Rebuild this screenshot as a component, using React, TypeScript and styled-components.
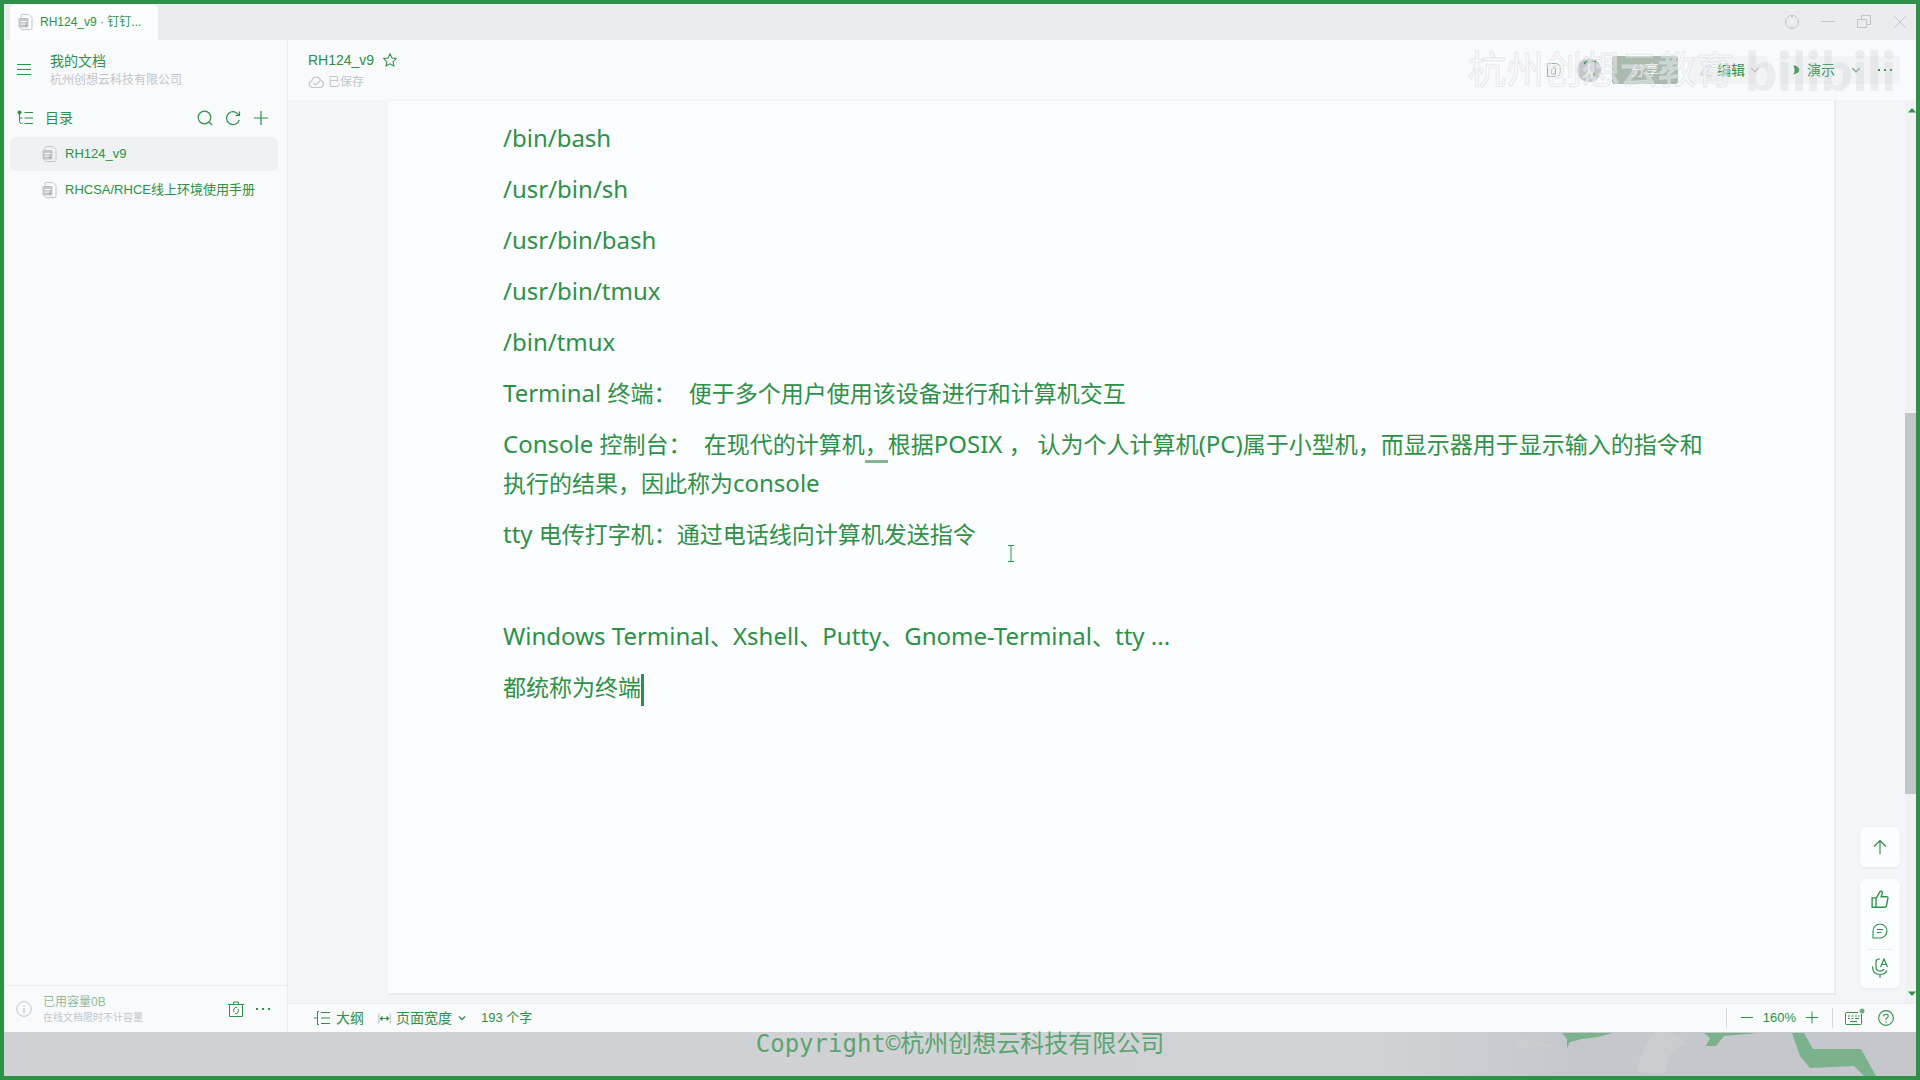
import React from "react";
import styled, { createGlobalStyle } from "styled-components";

const green = "#2d9147";
const gray = "#c2c5ca";
const line = "#ebecee";
const white = "#fcfdff";
const soft = "#f9fafc";
const ui = `"Liberation Sans", "Noto Sans CJK SC", sans-serif`;

const Global = createGlobalStyle`
  * { box-sizing: border-box; }
  body { margin: 0; background: ${white}; }
  button, select { font: inherit; color: inherit; background: none; border: 0; padding: 0; margin: 0; }
  p, h1, ul { margin: 0; padding: 0; font-weight: 400; }
  a { color: inherit; text-decoration: none; }
  svg { display: block; flex: none; }
`;

const Frame = styled.div`
  display: flex;
  flex-direction: column;
  height: 100vh;
  border: 4px solid ${green};
  color: ${green};
  background: ${soft};
  font: 14px/20px ${ui};
  overflow: hidden;
`;

/* ---- window bar ---- */
const WindowBar = styled.header`
  display: flex;
  justify-content: space-between;
  flex: none;
  height: 36px;
  padding: 0 8px 0 6px;
  background: ${line};
`;
const Tab = styled.button`
  display: flex;
  align-items: center;
  gap: 7px;
  width: 148px;
  padding: 0 8px;
  border-radius: 6px 6px 0 0;
  background: ${white};
  font-size: 12px;
  white-space: nowrap;
`;
const WindowButtons = styled.div`
  display: flex;
  align-items: center;
  gap: 20px;
  color: ${gray};
`;
const IconButton = styled.button<{ $tone?: string }>`
  display: flex;
  align-items: center;
  justify-content: center;
  min-width: 16px;
  height: 20px;
  color: ${(p) => p.$tone || "inherit"};
`;

/* ---- body ---- */
const Body = styled.div`
  display: flex;
  flex: 1;
  min-height: 0;
`;
const Sidebar = styled.aside`
  display: flex;
  flex-direction: column;
  flex: none;
  width: 284px;
  border-left: 1px solid ${line};
  border-right: 1px solid ${line};
`;
const SpaceHead = styled.div`
  display: flex;
  align-items: center;
  gap: 18px;
  height: 60px;
  padding: 0 11px;
`;
const Stack = styled.div`
  display: flex;
  flex-direction: column;
`;
const Muted = styled.span<{ $tone?: string; $size?: number }>`
  color: ${(p) => p.$tone || gray};
  font-size: ${(p) => p.$size || 12}px;
  line-height: ${(p) => (p.$size === 10 ? 14 : 18)}px;
`;
const CatalogHead = styled.div`
  display: flex;
  align-items: center;
  gap: 12px;
  height: 36px;
  padding: 0 18px 0 12px;
`;
const Grow = styled.span`
  flex: 1;
`;
const DocList = styled.ul`
  display: flex;
  flex-direction: column;
  flex: 1;
  gap: 2px;
  padding: 1px 9px 0 5px;
  list-style: none;
`;
const DocLink = styled.a<{ $active?: boolean }>`
  display: flex;
  align-items: center;
  gap: 8px;
  height: 34px;
  padding-left: 32px;
  border-radius: 6px;
  font-size: 13px;
  background: ${(p) => (p.$active ? "#f0f1f3" : "transparent")};
`;
const SideFoot = styled.footer`
  display: flex;
  align-items: center;
  gap: 11px;
  height: 47px;
  padding: 0 16px 0 11px;
  border-top: 1px solid ${line};
`;

const Main = styled.main`
  display: flex;
  flex-direction: column;
  flex: 1;
  min-width: 0;
`;
const DocHead = styled.header`
  display: flex;
  align-items: center;
  justify-content: space-between;
  position: relative;
  height: 61px;
  padding: 0 16px 0 20px;
  border-bottom: 1px solid #f4f5f7;
`;
const TitleRow = styled.div`
  display: flex;
  align-items: center;
  gap: 8px;
  padding-bottom: 2px;
  h1 { font-size: 14px; line-height: 22px; }
`;
const SavedRow = styled.div`
  display: flex;
  align-items: center;
  gap: 4px;
`;
const Tools = styled.div`
  display: flex;
  align-items: center;
  gap: 11px;
`;
const Avatar = styled.span`
  display: flex;
  align-items: center;
  justify-content: center;
  width: 24px;
  height: 24px;
  margin-left: 4px;
  border-radius: 50%;
  background: ${gray};
`;
const Share = styled.button`
  width: 66px;
  height: 28px;
  border-radius: 3px;
  color: ${line};
  background: #a9baaf;
`;
const ToolGroup = styled.div`
  display: flex;
  align-items: center;
  gap: 13px;
  height: 28px;
  padding: 0 7px 0 10px;
  border-radius: 4px;
  background: #f2f3f5;
`;
const ToolButton = styled.button`
  display: flex;
  align-items: center;
  gap: 4px;
`;
const Watermark = styled.span`
  position: absolute;
  right: 182px;
  top: 2px;
  color: rgba(252, 253, 255, 0.4);
  -webkit-text-stroke: 1px rgba(222, 224, 228, 0.7);
  font-size: 38px;
  line-height: 56px;
  pointer-events: none;
  white-space: nowrap;
`;
const SiteMark = styled.span`
  position: absolute;
  right: 20px;
  top: 0;
  color: rgba(194, 197, 202, 0.25);
  font: 900 56px/60px Lato, sans-serif;
  pointer-events: none;
`;

const Canvas = styled.div`
  display: flex;
  flex: 1;
  min-height: 0;
  position: relative;
  background: #f4f5f6;
`;
const Page = styled.article`
  flex: 1;
  margin: 0 71px 10px 100px;
  padding: 18px 116px 0 115px;
  background: ${white};
  box-shadow: 1px 1px 1px 1px ${line};
  font: 23px/39px "Noto Sans", "Noto Sans CJK SC", sans-serif;
  p { min-height: 39px; margin-bottom: 12px; }
`;
const Latin = styled.span`
  font-size: 24px;
  line-height: 24px;
`;
const Marked = styled.span`
  border-bottom: 3px solid #7fb691;
`;
const Caret = styled.span`
  display: inline-block;
  width: 3px;
  height: 32px;
  vertical-align: middle;
  background: ${green};
`;
const Pointer = styled.svg`
  position: absolute;
  left: 719px;
  top: 444px;
`;
const ScrollBar = styled.div`
  display: flex;
  flex-direction: column;
  align-items: flex-end;
  width: 11px;
  padding: 7px 0;
  background: #f0f1f3;
`;
const Spacer = styled.span<{ $part: number }>`
  flex: ${(p) => p.$part};
`;
const Thumb = styled.span`
  flex: 381;
  width: 11px;
  background: ${gray};
`;
const Floating = styled.div`
  display: flex;
  flex-direction: column;
  gap: 12px;
  position: absolute;
  right: 16px;
  bottom: 15px;
`;
const Card = styled.div`
  display: flex;
  flex-direction: column;
  align-items: center;
  gap: 12px;
  width: 40px;
  padding: 10px 0;
  border-radius: 6px;
  background: ${white};
  box-shadow: 0 1px 3px #e6e8ea;
`;
const Rule = styled.span`
  width: 26px;
  height: 1px;
  margin: -4px 0;
  background: ${line};
`;
const StatusBar = styled.footer`
  display: flex;
  align-items: center;
  justify-content: space-between;
  height: 29px;
  padding: 0 22px 0 26px;
  border-top: 1px solid ${line};
`;
const Group = styled.div<{ $gap: number }>`
  display: flex;
  align-items: center;
  gap: ${(p) => p.$gap}px;
`;
const Small = styled.span`
  font-size: 13px;
`;
const WidthSelect = styled.select`
  appearance: none;
  width: 56px;
`;
const Divider = styled.span`
  width: 1px;
  height: 20px;
  background: #d6d8dc;
`;

/* ---- desktop strip under the window ---- */
const Strip = styled.div`
  display: flex;
  justify-content: center;
  flex: none;
  position: relative;
  height: 44px;
  background: linear-gradient(90deg, #cfd1d5, #d0d2d6 72%, #c5c7cc 82%);
  color: #5aa571;
  font: 24px/24px "DejaVu Sans Mono", "Noto Sans CJK SC", monospace;
`;
const Leaves = styled.svg`
  position: absolute;
  right: 0;
  top: 0;
`;

type IconProps = { size?: number; w?: number; children: React.ReactNode };
const Icon = ({ size = 16, w = 1, children }: IconProps) => (
  <svg width={size} height={size} viewBox="0 0 16 16" fill="none" stroke="currentColor" strokeWidth={w} aria-hidden="true">
    {children}
  </svg>
);

const DocIcon = () => (
  <svg width="15" height="16" viewBox="0 0 15 16" fill="none" aria-hidden="true">
    <path d="M3 4V2q0-1.500 1.500-1.500H11L14 3.500V14q0 1.500-1.500 1.500h-8Q3 15.500 3 14v-1" stroke={gray} />
    <rect x="0.500" y="4" width="10" height="9.500" rx="1" fill={gray} />
    <path d="M2.500 7.500h6M2.500 10h4.500" stroke={white} />
    <path d="M7.500 11.500h1" stroke={green} />
  </svg>
);
const ChevronDown = ({ size = 10, tone = "currentColor" }: { size?: number; tone?: string }) => (
  <Icon size={size} w={2}><path d="M3 5.500l5 5 5-5" stroke={tone} /></Icon>
);
const Dots = () => (
  <Icon><g fill="currentColor" stroke="none"><rect x="1" y="7" width="2" height="2" /><rect x="7" y="7" width="2" height="2" /><rect x="13" y="7" width="2" height="2" /></g></Icon>
);

/* Latin runs are set one size larger than the Chinese around them. */
const Mixed = ({ text }: { text: string }) => (
  <>
    {text.split(/([\x20-\x7e]+)/).map((run, i) => (i % 2 ? <Latin key={i}>{run}</Latin> : run))}
  </>
);

export default function App() {
  return (
    <>
      <Global />
      <Frame>
        <WindowBar>
          <Tab><DocIcon />RH124_v9 · 钉钉...</Tab>
          <WindowButtons>
            <IconButton aria-label="状态"><Icon><circle cx="8" cy="8" r="6.500" /><path d="M8 1v3M8 12v3M1 8h2M13 8h2" /></Icon></IconButton>
            <IconButton aria-label="最小化"><Icon><path d="M1 7.500h14" /></Icon></IconButton>
            <IconButton aria-label="还原"><Icon><path d="M1.500 5.500h9v8h-9zM5.500 5V1.500h9v9H11" /></Icon></IconButton>
            <IconButton aria-label="关闭"><Icon><path d="M2 2l12 12M14 2L2 14" /></Icon></IconButton>
          </WindowButtons>
        </WindowBar>

        <Body>
          <Sidebar>
            <SpaceHead>
              <IconButton aria-label="菜单"><Icon><path d="M1 2.500h14M1 7.500h14M1 12.500h14" /></Icon></IconButton>
              <Stack>
                <span>我的文档</span>
                <Muted>杭州创想云科技有限公司</Muted>
              </Stack>
            </SpaceHead>
            <CatalogHead>
              <Icon><circle cx="2.500" cy="2.500" r="2" fill="currentColor" stroke="none" /><path d="M2.500 3v8.500q0 2 2 2H5.500M2.500 8h3M7.500 2.500H16M7.500 8H16M7.500 13.500H16" /></Icon>
              <span>目录</span>
              <Grow />
              <IconButton aria-label="搜索"><Icon w={1.2}><circle cx="7.500" cy="7.500" r="6.300" /><path d="M12 12l3 3" /></Icon></IconButton>
              <IconButton aria-label="刷新"><Icon w={1.2}><path d="M14 5.500A6.500 6.500 0 1 0 14.300 10M14.500 1.500V5.500H10.500" /></Icon></IconButton>
              <IconButton aria-label="新建"><Icon w={1.2}><path d="M8 1v14M1 8h14" /></Icon></IconButton>
            </CatalogHead>
            <DocList>
              <li><DocLink href="#rh124" $active><DocIcon />RH124_v9</DocLink></li>
              <li><DocLink href="#rhcsa"><DocIcon />RHCSA/RHCE线上环境使用手册</DocLink></li>
            </DocList>
            <SideFoot>
              <Icon><g stroke={gray}><circle cx="8" cy="8" r="7.300" /><path d="M8 7v5M8 4v1.500" strokeWidth="1.300" /></g></Icon>
              <Stack>
                <Muted $tone="#8dbb9b">已用容量0B</Muted>
                <Muted $size={10}>在线文档限时不计容量</Muted>
              </Stack>
              <Grow />
              <IconButton aria-label="回收站"><Icon><path d="M0 3.500h16M5.500 3V1h5v2M1.500 3.500v12h13v-12" /><path d="M9 6.500a2.600 3 0 0 0-3 4.500M7 12.500a2.600 3 0 0 0 3-4.500" /></Icon></IconButton>
              <IconButton aria-label="更多"><Dots /></IconButton>
            </SideFoot>
          </Sidebar>

          <Main>
            <DocHead>
              <Stack>
                <TitleRow>
                  <h1>RH124_v9</h1>
                  <IconButton aria-label="收藏"><Icon size={14} w={1.2}><path d="M8 1l2.200 4.700 5 .6-3.700 3.500 1 5L8 12.300 3.500 14.800l1-5L.8 6.300l5-.6z" /></Icon></IconButton>
                </TitleRow>
                <SavedRow>
                  <Icon><g stroke={gray} strokeWidth="1.200"><path d="M4 13.500a3.300 3.300 0 0 1-.2-6.500 4.600 4.600 0 0 1 8.900-.7A3.700 3.700 0 0 1 12 13.500z" /><path d="M5.500 9l2 2 4.500-4" /></g></Icon>
                  <Muted>已保存</Muted>
                </SavedRow>
              </Stack>
              <Watermark>杭州创想云教育</Watermark>
              <SiteMark>bilibili</SiteMark>
              <Tools>
                <IconButton aria-label="历史" $tone="#8fb69b"><Icon><path d="M9 14.500H1.500v-13H9q5.500 0 5.500 6.500T11 14M5.500 12v-5q2.500-2 4 0v5zM7 5h3" /></Icon></IconButton>
                <Avatar><Icon size={20}><path d="M8 3v4M3 14q5-2 5-7 1 6 5 7M10 9v6" stroke={line} strokeWidth="1.500" /><path d="M4 3l2-2M10 1h3v4M12 10v4" stroke={green} /></Icon></Avatar>
                <Share>分享</Share>
                <ToolGroup>
                  <ToolButton><Icon size={14}><path d="M2 14l1-4 8-8 3 3-8 8zM8 14.500h7" stroke={gray} /></Icon>编辑<ChevronDown size={12} tone={gray} /></ToolButton>
                </ToolGroup>
                <ToolGroup>
                  <ToolButton><Icon size={14}><path d="M5 2.500q9 2 6 8l-6 3q3-5 0-11z" fill="currentColor" stroke="none" /></Icon>演示</ToolButton>
                  <IconButton aria-label="演示选项"><ChevronDown size={12} tone="#8fb69b" /></IconButton>
                  <IconButton aria-label="更多"><Dots /></IconButton>
                </ToolGroup>
              </Tools>
            </DocHead>

            <Canvas>
              <Page>
                <p><Mixed text="/bin/bash" /></p>
                <p><Mixed text="/usr/bin/sh" /></p>
                <p><Mixed text="/usr/bin/bash" /></p>
                <p><Mixed text="/usr/bin/tmux" /></p>
                <p><Mixed text="/bin/tmux" /></p>
                <p><Mixed text={"Terminal 终端：\u00a0 便于多个用户使用该设备进行和计算机交互"} /></p>
                <p>
                  <Mixed text={"Console 控制台：\u00a0 在现代的计算机"} />
                  <Marked>，</Marked>
                  <Mixed text={"根据POSIX ，\u00a0认为个人计算机(PC)属于小型机，而显示器用于显示输入的指令和执行的结果，因此称为console"} />
                </p>
                <p><Mixed text="tty 电传打字机：通过电话线向计算机发送指令" /></p>
                <p />
                <p><Mixed text="Windows Terminal、Xshell、Putty、Gnome-Terminal、tty ..." /></p>
                <p>都统称为终端<Caret /></p>
              </Page>
              <ScrollBar>
                <svg width="8" height="5" viewBox="0 0 8 5"><path d="M0 4.500L4 0l4 4.500z" fill={green} /></svg>
                <Spacer $part={300} />
                <Thumb />
                <Spacer $part={197} />
                <svg width="8" height="5" viewBox="0 0 8 5"><path d="M0 .5L4 5 8 .5z" fill={green} /></svg>
              </ScrollBar>
              <Pointer width="8" height="17" viewBox="0 0 8 17" fill="none" stroke={green}><path d="M1 .5h6M1 16.500h6M4 1v15" /></Pointer>
              <Floating>
                <Card><IconButton aria-label="回到顶部"><Icon w={1.2}><path d="M8 15V1.500M2 7.500l6-6 6 6" /></Icon></IconButton></Card>
                <Card>
                  <IconButton aria-label="点赞"><Icon size={18} w={1.2}><path d="M1 7h3.500v8.300H1zM4.500 7.500L8 1.500q.8-1 1.800 0 .6.8 0 2.300L9 6h5q1.300 0 1 1.500l-1.200 6.300q-.3 1.500-1.800 1.500H4.500" /></Icon></IconButton>
                  <IconButton aria-label="评论"><Icon w={1.1}><path d="M1 15V8a7 7 0 1 1 7 7zM5 6.500h6M5 9.500h4.500" /></Icon></IconButton>
                  <Rule />
                  <IconButton aria-label="语音输入">
                    <svg width="18" height="20" viewBox="0 0 18 20" fill="none" stroke="currentColor" strokeWidth="1.200"><path d="M9 1H8Q5 1 5 4v5q0 4 4 4 3 0 3.700-2M1.500 8.500q0 8 7.500 8 5 0 7-4M9 16.500V20M9.500 9L13 1l3.500 8M10.800 6.500h4.500" /></svg>
                  </IconButton>
                </Card>
              </Floating>
            </Canvas>

            <StatusBar>
              <Group $gap={14}>
                <Group as="button" $gap={6}><Icon><path d="M5 1.500H3.500v13H5M0 8h3.500M7 2.500h9M7 8h9M7 13.500h9" /></Icon>大纲</Group>
                <Group as="label" $gap={5}>
                  <Icon size={13}><path d="M1 2v12M15 2v12" stroke={gray} strokeWidth="1.500" /><path d="M3 8h10M5.500 5.500L3 8l2.500 2.500M10.500 5.500L13 8l-2.500 2.500" strokeWidth="1.500" /></Icon>
                  <WidthSelect aria-label="页面缩放方式"><option>页面宽度</option></WidthSelect>
                  <ChevronDown />
                </Group>
                <Small>193 个字</Small>
              </Group>
              <Group $gap={12}>
                <Divider />
                <Group $gap={8}>
                  <IconButton aria-label="缩小"><Icon><path d="M2 7.500h12" /></Icon></IconButton>
                  <Small>160%</Small>
                  <IconButton aria-label="放大"><Icon><path d="M2 7.500h12M8 1.500v12" /></Icon></IconButton>
                </Group>
                <Divider />
                <Group $gap={13}>
                  <IconButton aria-label="快捷键">
                    <svg width="20" height="20" viewBox="0 0 20 20" fill="none" stroke="currentColor"><path d="M13 4.500H1.500q-1 0-1 1v10q0 1 1 1h14q1 0 1-1V6M3 8h2M6.500 8h2M10 8h2M13 8h1.500M3 10.500h2M6.500 10.500h2M10 10.500h4M5 13.500h7" /><circle cx="17" cy="3" r="2.500" fill="#6fae82" stroke="none" /></svg>
                  </IconButton>
                  <IconButton aria-label="帮助"><Icon w={1.1}><circle cx="8" cy="8" r="7.400" /><path d="M5.800 6.500Q5.800 4.200 8 4.200t2.200 2Q10.200 7.500 8 8.500V10M8 11.300v1.400" /></Icon></IconButton>
                </Group>
              </Group>
            </StatusBar>
          </Main>
        </Body>

        <Strip>
          <Leaves width="420" height="44" viewBox="0 0 420 44">
            <path d="M20 4l40 10-38 2zM140 40q8-30 20-40 22-2 30 12-20 4-20 30z" fill="#cacccf" />
            <path d="M66 1h50l-14 4-16 2-12 3-3 6v-9zM208 1h54l-34 3-8 10h-10l4-8zM296 1h12l9 16h48l15 27h-12l-10-10-44 2-10-12z" fill="#7bb18c" />
          </Leaves>
          Copyright©杭州创想云科技有限公司
        </Strip>
      </Frame>
    </>
  );
}
